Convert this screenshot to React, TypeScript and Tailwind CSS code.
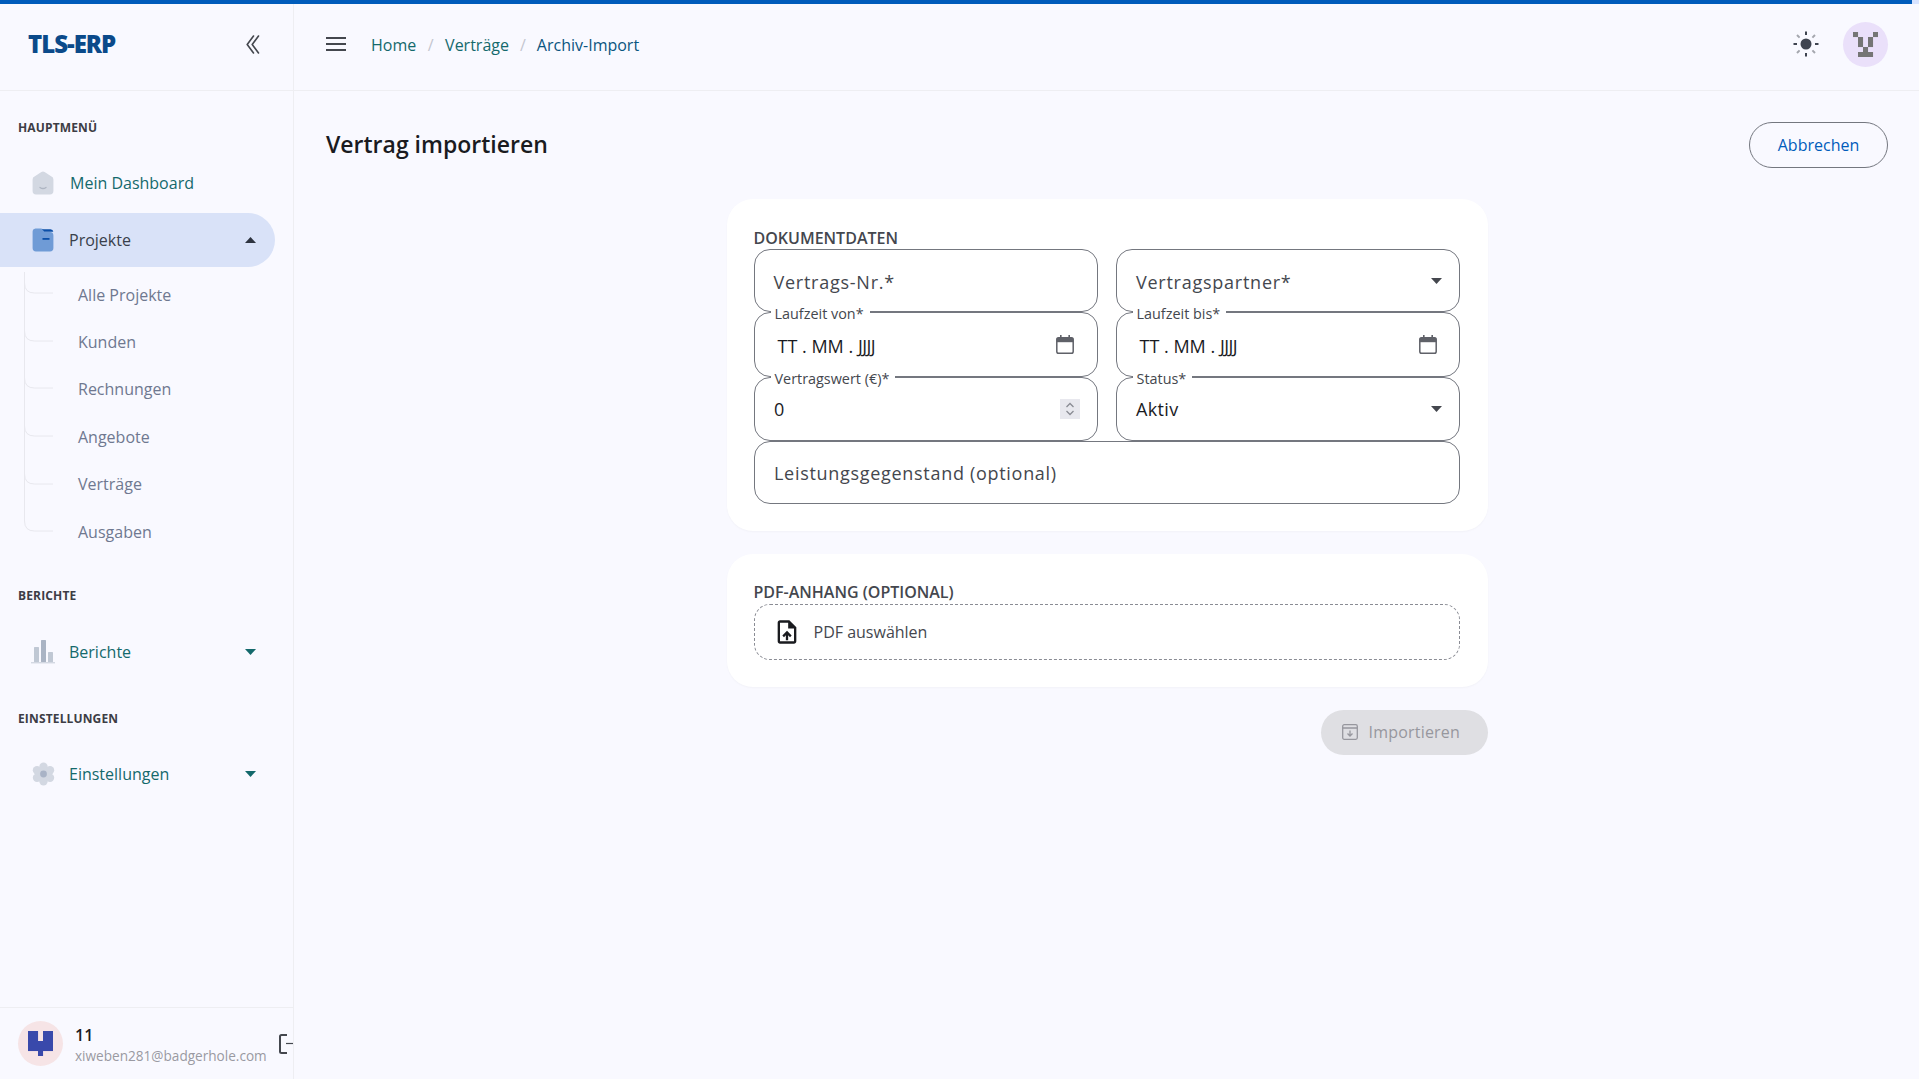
import React from "react";

const HomeIcon = () => (
  <svg width="24" height="24" viewBox="0 0 24 24" className="shrink-0">
    <path d="M10.4 1 a2.6 2.6 0 0 1 3.2 0 L20.5 5.6 a3 3 0 0 1 1.9 2.8 V20 a3.4 3.4 0 0 1-3.4 3.4 H5 a3.4 3.4 0 0 1-3.4-3.4 V8.4 A3 3 0 0 1 3.5 5.6 Z" fill="#d3d8e2" />
    <path d="M9 16.4 q3 2.2 6 0" stroke="#aeb5c2" strokeWidth="1.3" fill="none" strokeLinecap="round" />
  </svg>
);
const FolderIcon = () => (
  <svg width="24" height="24" viewBox="0 0 24 24" className="shrink-0">
    <path d="M4.5 .5 H10 q2 0 3 2 L14 4 H19 a3.4 3.4 0 0 1 3.4 3.4 V20 a3.4 3.4 0 0 1-3.4 3.4 H5 A3.4 3.4 0 0 1 1.6 20 V4 A3.4 3.4 0 0 1 4.5 .5 Z" fill="#6f9bd6" />
    <path d="M11 1.2 H19.5 q2.6 .4 2.8 2.6 H13.5 Z" fill="#0b4fa8" />
    <rect x="11.5" y="10" width="7" height="1.8" fill="#0b4fa8" />
  </svg>
);
const ChartIcon = () => (
  <svg width="24" height="24" viewBox="0 0 24 24" className="shrink-0">
    <rect x="3" y="7" width="5" height="15" rx="0.6" fill="#c0c8d4" />
    <rect x="10" y="0" width="5" height="22" rx="0.6" fill="#aab4c4" />
    <rect x="17" y="12" width="5" height="10" rx="0.6" fill="#c0c8d4" />
    <rect x="0" y="22" width="24" height="1.4" fill="#d3d8e2" />
  </svg>
);
const GearIcon = () => (
  <svg width="24" height="24" viewBox="0 0 24 24" className="shrink-0">
    <g fill="#d3d8e2">
      <circle cx="12.5" cy="12" r="7.5" />
      <circle cx="12.5" cy="4.7" r="4.2" />
      <circle cx="12.5" cy="19.3" r="4.2" />
      <circle cx="6" cy="8.2" r="4.2" />
      <circle cx="19" cy="8.2" r="4.2" />
      <circle cx="6" cy="15.8" r="4.2" />
      <circle cx="19" cy="15.8" r="4.2" />
    </g>
    <circle cx="12.5" cy="12" r="3.4" fill="#a9b3c6" />
  </svg>
);
const Tri = ({ up, color }: { up?: boolean; color: string }) => (
  <svg width="11" height="6" viewBox="0 0 11 6" className="shrink-0">
    <path d={up ? "M0 6 L5.5 0 L11 6 Z" : "M0 0 H11 L5.5 6 Z"} fill={color} />
  </svg>
);
const CalIcon = () => (
  <svg width="18" height="19" viewBox="0 0 18 19" className="shrink-0">
    <rect x="0.8" y="2.8" width="16.4" height="15.4" rx="1.8" fill="none" stroke="#5f6168" strokeWidth="1.5" />
    <rect x="0.8" y="2.8" width="16.4" height="4.4" fill="#5f6168" />
    <rect x="4" y="0" width="1.6" height="3" fill="#5f6168" />
    <rect x="12.4" y="0" width="1.6" height="3" fill="#5f6168" />
  </svg>
);
const Identicon = ({ cells, color, size = 25 }: { cells: number[][]; color: string; size?: number }) => (
  <svg width={size} height={size} viewBox="0 0 25 25">
    {cells.map(([x, y], i) => (
      <rect key={i} x={x * 5} y={y * 5} width="5.05" height="5.05" fill={color} />
    ))}
  </svg>
);

const Label = ({ text }: { text: string }) => (
  <span className="absolute left-[16px] top-[-6px] z-10 bg-white pl-[4px] pr-[6px] text-[14.4px] leading-[14px] text-[#44474e]">{text}</span>
);

const Field = ({ h, children }: { h: string; children: React.ReactNode }) => (
  <div className={`relative flex items-center rounded-2xl border border-[#74777f] bg-white ${h}`}>{children}</div>
);

const DateValue = () => (
  <span className="pl-[23px] text-[18px] text-[#1a1b1f]">
    TT . MM . <span className="tracking-[-0.03em]">JJJJ</span>
  </span>
);

const Section = ({ children, cls }: { children: React.ReactNode; cls: string }) => (
  <div className={`pl-[18px] text-[12px] leading-[16px] font-bold tracking-[0.15px] text-[#3d3d45] ${cls}`}>{children}</div>
);

const subs = ["Alle Projekte", "Kunden", "Rechnungen", "Angebote", "Verträge", "Ausgaben"];
const branchY = [22, 70, 117, 165, 213, 260];

export default function App() {
  return (
    <div className="flex h-[1079px] w-[1919px] flex-col overflow-hidden bg-[#f9f9ff] font-['Open_Sans',sans-serif]">
      <div className="h-[4px] shrink-0 bg-[#d7e3ff]">
        <div className="h-full w-[1912px] bg-[#005cbb]" />
      </div>
      <div className="flex min-h-0 flex-1">
        {/* Sidebar */}
        <aside className="flex w-[294px] shrink-0 flex-col overflow-hidden border-r border-[#eeeef2]">
          <div className="flex h-[87px] shrink-0 items-center justify-between border-b border-[#eeeef2] pb-[6px] pl-[28px] pr-[33px]">
            <span className="text-[24px] font-extrabold leading-none tracking-[-1px] text-[#0b4a8a]">TLS-ERP</span>
            <svg width="14" height="19" viewBox="0 0 14 19" fill="none" stroke="#44474e" strokeWidth="1.6" strokeLinecap="round" strokeLinejoin="round">
              <path d="M7.5 1 L1.2 9.5 L7.5 18" />
              <path d="M12.5 1 L6.2 9.5 L12.5 18" />
            </svg>
          </div>
          <nav className="flex-1">
            <Section cls="mt-[29px]">HAUPTMENÜ</Section>
            <div className="mt-[20px] flex h-[54px] items-center gap-[15px] pl-[31px] text-[16px] font-medium text-[#14696c]">
              <HomeIcon />
              Mein Dashboard
            </div>
            <div className="mt-[3px] flex h-[54px] w-[275px] items-center gap-[14px] rounded-r-[27px] bg-[#d9e2f8] pl-[31px] pr-[19px] text-[16px] font-medium text-[#3a3f4b]">
              <FolderIcon />
              <span className="flex-1">Projekte</span>
              <Tri up color="#2e3440" />
            </div>
            <div className="relative mt-[4px]">
              <svg className="absolute left-0 top-0" width="60" height="270" fill="none" stroke="#e8e8ee" strokeWidth="1">
                <path d="M24.5 1 V250 q0 10 10 10 H53" />
                {branchY.slice(0, 5).map((y) => (
                  <path key={y} d={`M24.5 ${y - 10} q0 10 10 10 H53`} />
                ))}
              </svg>
              {subs.map((s) => (
                <div key={s} className="flex h-[47.4px] items-center pl-[78px] text-[16px] text-[#6f7890]">{s}</div>
              ))}
            </div>
            <Section cls="mt-[33px]">BERICHTE</Section>
            <div className="mt-[21px] flex h-[54px] items-center gap-[14px] pl-[31px] pr-[37px] text-[16px] font-medium text-[#14696c]">
              <ChartIcon />
              <span className="flex-1">Berichte</span>
              <Tri color="#14696c" />
            </div>
            <Section cls="mt-[32px]">EINSTELLUNGEN</Section>
            <div className="mt-[20px] flex h-[54px] items-center gap-[14px] pl-[31px] pr-[37px] text-[16px] font-medium text-[#14696c]">
              <GearIcon />
              <span className="flex-1">Einstellungen</span>
              <Tri color="#14696c" />
            </div>
          </nav>
          <div className="flex h-[72px] shrink-0 items-center border-t border-[#eeeef2] pl-[18px]">
            <div className="flex h-[45px] w-[45px] shrink-0 items-center justify-center rounded-full bg-[#f6e4e6]">
              <Identicon
                color="#3949ab"
                cells={[[0,0],[1,0],[3,0],[4,0],[0,1],[1,1],[3,1],[4,1],[0,2],[1,2],[2,2],[3,2],[4,2],[0,3],[1,3],[2,3],[3,3],[4,3],[2,4]]}
              />
            </div>
            <div className="ml-[12px] flex w-[192px] shrink-0 flex-col pt-[3px]">
              <span className="text-[16px] font-semibold leading-[21px] text-[#1a1b1f]">11</span>
              <span className="whitespace-nowrap text-[13.6px] leading-[20px] text-[#9a9aa2]">xiweben281@badgerhole.com</span>
            </div>
            <svg className="ml-[12px] shrink-0" width="16" height="20" viewBox="0 0 16 20" fill="none" stroke="#44474e">
              <path d="M8 1 H2.5 a1.5 1.5 0 0 0-1.5 1.5 V17.5 A1.5 1.5 0 0 0 2.5 19 H8" strokeWidth="2" />
              <path d="M7 9.5 H16" strokeWidth="1.2" />
            </svg>
          </div>
        </aside>

        {/* Main */}
        <div className="flex min-w-0 flex-1 flex-col">
          <header className="flex h-[87px] shrink-0 items-center border-b border-[#eeeef2] pb-[6px] pl-[32px] pr-[31px]">
            <svg width="20" height="14" viewBox="0 0 20 14" stroke="#44474e" strokeWidth="2">
              <path d="M0 1 H20 M0 7 H20 M0 13 H20" />
            </svg>
            <div className="ml-[25px] flex flex-1 items-center pt-[1px] text-[16px]">
              <span className="text-[#14696c]">Home</span>
              <span className="mx-[11.5px] text-[#c4c6cf]">/</span>
              <span className="text-[#14696c]">Verträge</span>
              <span className="mx-[11px] text-[#c4c6cf]">/</span>
              <span className="text-[#0b5580]">Archiv-Import</span>
            </div>
            <svg width="26" height="26" viewBox="0 0 26 26" className="mr-[24px]">
              <circle cx="13" cy="13" r="5.5" fill="#3f4450" />
              <g stroke="#3f4450" strokeWidth="2" strokeLinecap="butt">
                <path d="M13 .5 V4 M13 22 V25.5 M.5 13 H4 M22 13 H25.5" />
              </g>
              <g stroke="#a5a7ae" strokeWidth="2">
                <path d="M4 4 L6.6 6.6 M22 4 L19.4 6.6 M4 22 L6.6 19.4 M22 22 L19.4 19.4" />
              </g>
            </svg>
            <div className="flex h-[45px] w-[45px] items-center justify-center rounded-full bg-[#eae0fa]">
              <Identicon
                color="#757575"
                cells={[[0,0],[4,0],[1,1],[3,1],[1,2],[3,2],[2,3],[1,4],[2,4],[3,4]]}
              />
            </div>
          </header>
          <main className="flex-1 pl-[32px] pr-[31px] pt-[31px]">
            <div className="flex h-[45px] items-center justify-between">
              <h1 className="text-[23px] font-semibold leading-none text-[#1a1b1f]">Vertrag importieren</h1>
              <button className="h-[46px] w-[139px] rounded-full border border-[#74777f] text-[16px] font-medium text-[#005cbb]">Abbrechen</button>
            </div>
            <div className="mx-auto mt-[32px] w-[761px]">
              <section className="rounded-[26px] bg-white px-[27px] pb-[27px] pt-[27px] shadow-[0_1px_2px_rgba(0,0,0,0.03)]">
                <h2 className="pt-[1px] text-[16px] font-[580] leading-[22px] text-[#44474e]">DOKUMENTDATEN</h2>
                <div className="grid grid-cols-[344px_344px] gap-x-[18px]">
                  <Field h="h-[63px]">
                    <span className="pl-[19px] pt-[3px] text-[18px] tracking-[0.75px] text-[#44474e]">Vertrags-Nr.*</span>
                  </Field>
                  <Field h="h-[63px]">
                    <span className="flex-1 pl-[19.5px] pt-[3px] text-[18px] tracking-[0.75px] text-[#44474e]">Vertragspartner*</span>
                    <span className="pr-[17px]"><Tri color="#44474e" /></span>
                  </Field>
                  <Field h="h-[65px]">
                    <Label text="Laufzeit von*" />
                    <span className="flex-1 pt-[3px]"><DateValue /></span>
                    <span className="pr-[23px]"><CalIcon /></span>
                  </Field>
                  <Field h="h-[65px]">
                    <Label text="Laufzeit bis*" />
                    <span className="flex-1 pt-[3px]"><DateValue /></span>
                    <span className="pr-[22px]"><CalIcon /></span>
                  </Field>
                  <Field h="h-[64px]">
                    <Label text="Vertragswert (€)*" />
                    <span className="flex-1 pl-[19.5px] pt-[1px] text-[18px] text-[#1a1b1f]">0</span>
                    <span className="mr-[17px] flex h-[20px] w-[20px] items-center justify-center bg-[#e8e8ee]">
                      <svg width="10" height="14" viewBox="0 0 10 14" fill="none" stroke="#8a8c94" strokeWidth="1.3">
                        <path d="M1.5 5 L5 1.5 L8.5 5 M1.5 9 L5 12.5 L8.5 9" />
                      </svg>
                    </span>
                  </Field>
                  <Field h="h-[64px]">
                    <Label text="Status*" />
                    <span className="flex-1 pl-[19.5px] pt-[1px] text-[18px] tracking-[0.35px] text-[#1a1b1f]">Aktiv</span>
                    <span className="pr-[17px]"><Tri color="#44474e" /></span>
                  </Field>
                  <div className="col-span-2">
                    <Field h="h-[63px]">
                      <span className="pl-[19.5px] pt-[1px] text-[18px] tracking-[0.7px] text-[#44474e]">Leistungsgegenstand (optional)</span>
                    </Field>
                  </div>
                </div>
              </section>
              <section className="mt-[23px] rounded-[26px] bg-white px-[27px] pb-[27px] pt-[27px] shadow-[0_1px_2px_rgba(0,0,0,0.03)]">
                <h2 className="text-[16px] font-[580] leading-[23px] text-[#44474e]">PDF-ANHANG (OPTIONAL)</h2>
                <div className="flex h-[56px] w-[706px] items-center gap-[13px] rounded-2xl border border-dashed border-[#8a8c94] pl-[18px]">
                  <svg width="28" height="28" viewBox="0 0 24 24" fill="#1a1b1f" className="shrink-0">
                    <path d="M14 2H6c-1.1 0-2 .9-2 2v16c0 1.1.9 2 2 2h12c1.1 0 2-.9 2-2V8l-6-6zm4 18H6V4h7v5h5v11zM8 15.01l1.41 1.41L11 14.84V19h2v-4.16l1.59 1.59L16 15.01 12.01 11z" />
                  </svg>
                  <span className="text-[16px] text-[#44474e]">PDF auswählen</span>
                </div>
              </section>
              <div className="mt-[23px] flex justify-end">
                <button className="flex h-[45px] w-[167px] items-center gap-[11px] rounded-full bg-[#dfdfe3] pb-[1px] pl-[21px] text-[16px] font-medium tracking-[0.2px] text-[#97979e]">
                  <svg width="16" height="16" viewBox="0 0 16 16" fill="none" stroke="#97979e" strokeWidth="1.3" className="shrink-0">
                    <rect x="0.7" y="0.7" width="14.6" height="14.6" rx="1.5" />
                    <path d="M.7 4 H15.3 M8 6.5 V12 M5.5 9.5 L8 12 L10.5 9.5" />
                  </svg>
                  Importieren
                </button>
              </div>
            </div>
          </main>
        </div>
      </div>
    </div>
  );
}
